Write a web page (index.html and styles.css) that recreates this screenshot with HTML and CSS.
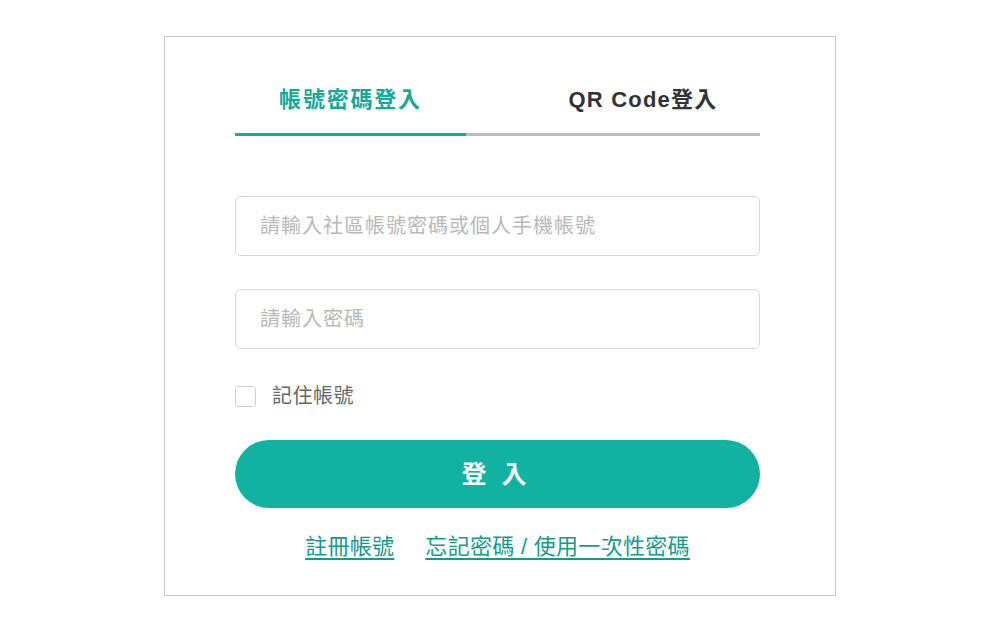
FILE: index.html
```html
<!DOCTYPE html>
<html lang="zh-Hant">
<head>
<meta charset="utf-8">
<title>登入</title>
<link rel="stylesheet" href="styles.css">
</head>
<body>
<div class="card">
  <div class="tabs">
    <div class="tab tab-active">帳號密碼登入</div>
    <div class="tab tab-qr">QR Code登入</div>
  </div>
  <form class="form">
    <input class="field field-account" type="text" placeholder="請輸入社區帳號密碼或個人手機帳號">
    <input class="field field-password" type="password" placeholder="請輸入密碼">
    <label class="remember">
      <input class="check" type="checkbox">
      <span class="remember-text">記住帳號</span>
    </label>
    <button class="submit" type="button">登 入</button>
    <div class="links">
      <a class="link" href="#">註冊帳號</a>
      <a class="link" href="#">忘記密碼 / 使用一次性密碼</a>
    </div>
  </form>
</div>
</body>
</html>
```

FILE: styles.css
```css
html, body {
  margin: 0;
  padding: 0;
  background: #ffffff;
}

body {
  font-family: "Liberation Sans", "Noto Sans CJK TC", sans-serif;
}

.card {
  box-sizing: border-box;
  width: 672px;
  height: 560px;
  margin: 36px auto 0;
  border: 1px solid #c9c9c9;
  padding: 48px 75px 0 70px;
}

.tabs {
  display: flex;
  width: 525px;
}

.tab {
  line-height: 30px;
  height: 30px;
  padding-bottom: 18px;
  font-size: 22px;
  font-weight: 700;
  text-align: center;
}

.tab-active {
  width: 231px;
  color: #16a99a;
  letter-spacing: 1.8px;
  border-bottom: 3px solid #13ad9d;
}

.tab-qr {
  flex: 1;
  padding-left: 60px;
  color: #333333;
  letter-spacing: 1.2px;
  border-bottom: 3px solid #bdbdbd;
}

.form {
  display: flex;
  flex-direction: column;
  width: 525px;
}

.field {
  box-sizing: border-box;
  width: 525px;
  height: 60px;
  border: 1.5px solid #d6d6d6;
  border-radius: 6px;
  padding: 1px 24px 0;
  font-family: inherit;
  font-size: 20px;
  letter-spacing: 1px;
  color: #333333;
  outline: none;
  background: #ffffff;
}

.field::placeholder {
  color: #b8b8b8;
}

.field-account {
  margin-top: 60px;
}

.field-password {
  margin-top: 33px;
}

.remember {
  display: flex;
  align-items: center;
  gap: 16px;
  margin-top: 32px;
  height: 30px;
  cursor: pointer;
}

.check {
  appearance: none;
  -webkit-appearance: none;
  box-sizing: border-box;
  width: 21px;
  height: 21px;
  margin: 0;
  border: 1.5px solid #cfcfcf;
  border-radius: 3px;
  background: #ffffff;
}

.remember-text {
  font-size: 20px;
  line-height: 30px;
  color: #666666;
  letter-spacing: 0.5px;
}

.submit {
  margin-top: 29px;
  height: 68px;
  width: 525px;
  border: none;
  border-radius: 34px;
  background: #12b2a2;
  color: #ffffff;
  font-family: inherit;
  font-size: 25px;
  font-weight: 700;
  letter-spacing: 4px;
  padding: 0 3px 4px 0;
  cursor: pointer;
}

.links {
  display: flex;
  justify-content: center;
  gap: 31px;
  margin-top: 24px;
  line-height: 30px;
}

.link {
  font-size: 22px;
  color: #17998c;
  letter-spacing: 0.3px;
  text-decoration: underline;
  text-underline-offset: 4px;
  text-decoration-thickness: 2px;
}
```
